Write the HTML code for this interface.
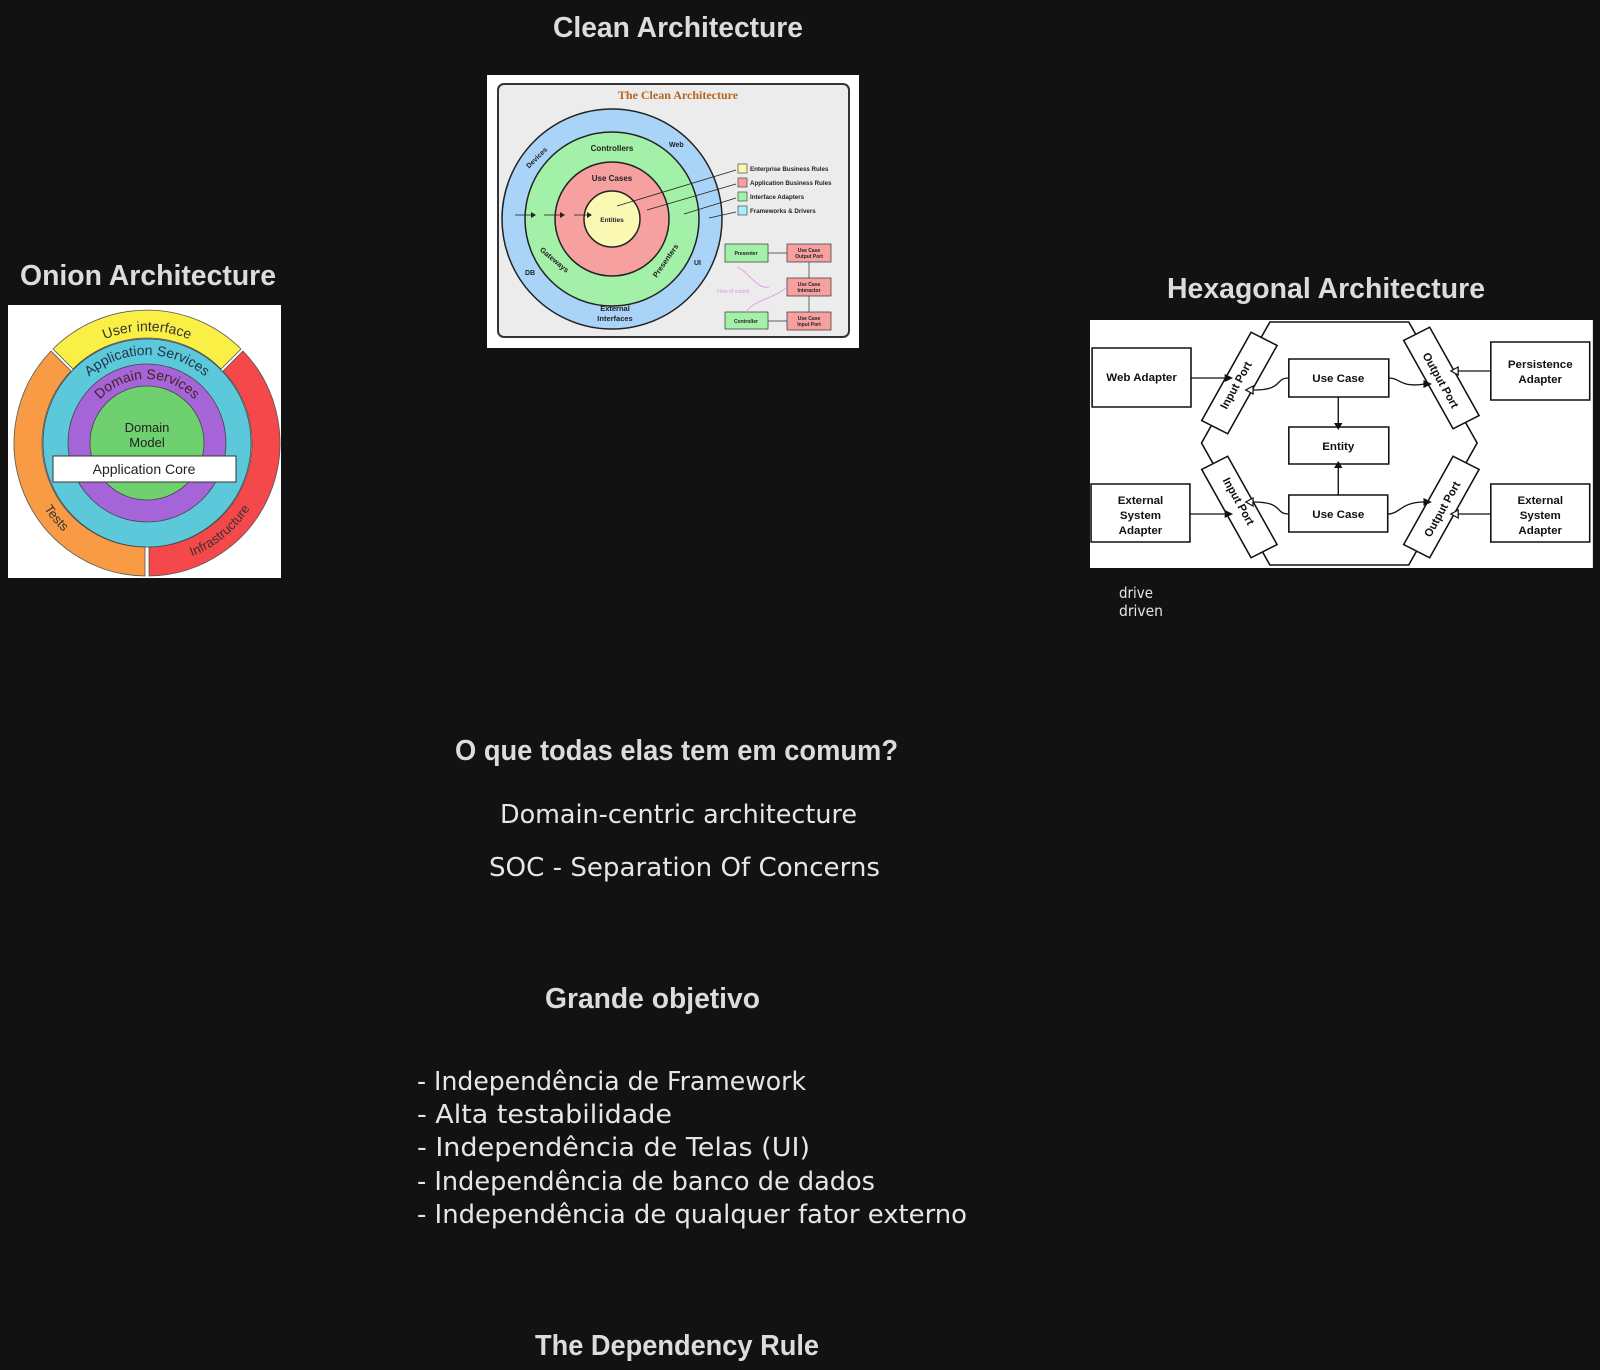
<!DOCTYPE html>
<html><head><meta charset="utf-8"><style>
html,body{margin:0;padding:0;background:#121212;}
svg{display:block}
.t{font-family:"Liberation Sans",sans-serif;font-weight:bold;fill:#dcdcdc;}
.h{font-family:"DejaVu Sans","Liberation Sans",sans-serif;font-weight:normal;fill:#e6e6e6;}
</style></head><body>
<svg width="1600" height="1370" viewBox="0 0 1600 1370" xmlns="http://www.w3.org/2000/svg">
<rect width="1600" height="1370" fill="#121212"/>

<!-- Titles -->
<text class="t" x="553" y="37" font-size="29" textLength="250" lengthAdjust="spacingAndGlyphs">Clean Architecture</text>
<text class="t" x="20" y="285" font-size="29" textLength="256" lengthAdjust="spacingAndGlyphs">Onion Architecture</text>
<text class="t" x="1167" y="298" font-size="29" textLength="318" lengthAdjust="spacingAndGlyphs">Hexagonal Architecture</text>
<text class="t" x="455" y="760" font-size="29" textLength="443" lengthAdjust="spacingAndGlyphs">O que todas elas tem em comum?</text>
<text class="t" x="545" y="1008" font-size="29" textLength="215" lengthAdjust="spacingAndGlyphs">Grande objetivo</text>
<text class="t" x="535" y="1355" font-size="29" textLength="284" lengthAdjust="spacingAndGlyphs">The Dependency Rule</text>

<!-- handwritten -->
<text class="h" x="500" y="823" font-size="26" textLength="357" lengthAdjust="spacingAndGlyphs">Domain-centric architecture</text>
<text class="h" x="489" y="876" font-size="26" textLength="391" lengthAdjust="spacingAndGlyphs">SOC - Separation Of Concerns</text>
<text class="h" x="417" y="1090" font-size="26" textLength="389" lengthAdjust="spacingAndGlyphs">- Independência de Framework</text>
<text class="h" x="417" y="1123" font-size="26" textLength="255" lengthAdjust="spacingAndGlyphs">- Alta testabilidade</text>
<text class="h" x="417" y="1156" font-size="26" textLength="393" lengthAdjust="spacingAndGlyphs">- Independência de Telas (UI)</text>
<text class="h" x="417" y="1190" font-size="26" textLength="458" lengthAdjust="spacingAndGlyphs">- Independência de banco de dados</text>
<text class="h" x="417" y="1223" font-size="26" textLength="550" lengthAdjust="spacingAndGlyphs">- Independência de qualquer fator externo</text>
<text class="h" x="1119" y="598" font-size="15" textLength="34" lengthAdjust="spacingAndGlyphs">drive</text>
<text class="h" x="1119" y="616" font-size="15" textLength="44" lengthAdjust="spacingAndGlyphs">driven</text>

<!-- Onion -->
<g transform="translate(8,305)">
<rect width="273" height="273" fill="#fff"/>
<g transform="translate(139,138)">
<path d="M-94,-94 A133,133 0 0 1 94,-94 L74,-74 A104,104 0 0 0 -74,-74 Z" fill="#f9ef45" stroke="#555" stroke-width="0.8"/>
<path d="M-96,-92 A133,133 0 0 0 -2,133 L-2,104 A104,104 0 0 1 -76,-72 Z" fill="#f99b45" stroke="#555" stroke-width="0.8"/>
<path d="M96,-92 A133,133 0 0 1 2,133 L2,104 A104,104 0 0 0 76,-72 Z" fill="#f5484a" stroke="#555" stroke-width="0.8"/>
<circle r="104" fill="#5cc9da" stroke="#444" stroke-width="0.8"/>
<circle r="79" fill="#a564d8" stroke="#444" stroke-width="0.8"/>
<circle r="57" fill="#6fd06f" stroke="#444" stroke-width="0.8"/>
<defs>
<path id="a1" d="M-112,0 A112,112 0 0 1 112,0"/>
<path id="a2" d="M-88,0 A88,88 0 0 1 88,0"/>
<path id="a3" d="M-64,0 A64,64 0 0 1 64,0"/>
<path id="a4" d="M-122,0 A122,122 0 0 0 122,0"/>
</defs>
<text font-family="Liberation Sans,sans-serif" font-size="14" fill="#333"><textPath href="#a1" startOffset="50%" text-anchor="middle">User interface</textPath></text>
<text font-family="Liberation Sans,sans-serif" font-size="14" fill="#234"><textPath href="#a2" startOffset="50%" text-anchor="middle">Application Services</textPath></text>
<text font-family="Liberation Sans,sans-serif" font-size="14" fill="#422"><textPath href="#a3" startOffset="50%" text-anchor="middle">Domain Services</textPath></text>
<text font-family="Liberation Sans,sans-serif" font-size="13" fill="#333"><textPath href="#a4" startOffset="22%" text-anchor="middle">Tests</textPath></text>
<text font-family="Liberation Sans,sans-serif" font-size="13" fill="#333"><textPath href="#a4" startOffset="72%" text-anchor="middle">Infrastructure</textPath></text>
<text x="0" y="-11" text-anchor="middle" font-family="Liberation Sans,sans-serif" font-size="13" fill="#222">Domain</text>
<text x="0" y="4" text-anchor="middle" font-family="Liberation Sans,sans-serif" font-size="13" fill="#222">Model</text>
</g>
<rect x="45" y="151" width="183" height="26" fill="#fff" stroke="#333"/>
<text x="136" y="169" text-anchor="middle" font-family="Liberation Sans,sans-serif" font-size="14" fill="#222">Application Core</text>
</g>

<!-- Clean -->
<g transform="translate(487,75)">
<rect width="372" height="273" fill="#fff"/>
<rect x="11" y="9" width="351" height="253" rx="6" fill="#ececec" stroke="#333" stroke-width="2"/>
<text x="191" y="24" text-anchor="middle" font-family="Liberation Serif,serif" font-weight="bold" font-size="12" fill="#b5651d">The Clean Architecture</text>
<circle cx="125" cy="144" r="110" fill="#a9d3f7" stroke="#222" stroke-width="1.5"/>
<circle cx="125" cy="144" r="87" fill="#a3f0a8" stroke="#222" stroke-width="1.5"/>
<circle cx="125" cy="144" r="57" fill="#f6a0a0" stroke="#222" stroke-width="1.5"/>
<circle cx="125" cy="144" r="28" fill="#fbf8b3" stroke="#222" stroke-width="1.5"/>
<g font-family="Liberation Sans,sans-serif" font-weight="bold" fill="#222">
<text x="125" y="76" text-anchor="middle" font-size="8">Controllers</text>
<text x="125" y="106" text-anchor="middle" font-size="8">Use Cases</text>
<text x="125" y="147" text-anchor="middle" font-size="6.5">Entities</text>
<text x="182" y="72" font-size="7">Web</text>
<text x="38" y="92" font-size="7" transform="rotate(-45 42 88)">Devices</text>
<text x="38" y="200" font-size="7">DB</text>
<text x="207" y="190" font-size="7">UI</text>
<text x="128" y="236" text-anchor="middle" font-size="7.5">External</text>
<text x="128" y="246" text-anchor="middle" font-size="7.5">Interfaces</text>
<text x="50" y="182" font-size="7.5" transform="rotate(40 60 182)">Gateways</text>
<text x="155" y="195" font-size="7.5" transform="rotate(-55 170 185)">Presenters</text>
</g>
<g stroke="#222" stroke-width="0.8">
<line x1="28" y1="140" x2="44" y2="140"/><line x1="57" y1="140" x2="73" y2="140"/><line x1="87" y1="140" x2="100" y2="140"/>
<line x1="130" y1="131" x2="249" y2="95"/><line x1="160" y1="135" x2="249" y2="109"/><line x1="197" y1="139" x2="249" y2="123"/><line x1="222" y1="143" x2="249" y2="137"/>
</g>
<g fill="#222"><path d="M44,137 L49,140 L44,143Z"/><path d="M73,137 L78,140 L73,143Z"/><path d="M100,137 L105,140 L100,143Z"/></g>
<rect x="251" y="89" width="9" height="9" fill="#fbf8b3" stroke="#333" stroke-width="0.6"/>
<rect x="251" y="103" width="9" height="9" fill="#f6a0a0" stroke="#333" stroke-width="0.6"/>
<rect x="251" y="117" width="9" height="9" fill="#a3f0a8" stroke="#333" stroke-width="0.6"/>
<rect x="251" y="131" width="9" height="9" fill="#a9eef7" stroke="#333" stroke-width="0.6"/>
<g font-family="Liberation Sans,sans-serif" font-weight="bold" font-size="6.2" fill="#222">
<text x="263" y="96">Enterprise Business Rules</text>
<text x="263" y="110">Application Business Rules</text>
<text x="263" y="124">Interface Adapters</text>
<text x="263" y="138">Frameworks &amp; Drivers</text>
</g>
<g stroke="#333" stroke-width="0.7" font-family="Liberation Sans,sans-serif" font-weight="bold" font-size="5" text-anchor="middle">
<rect x="238" y="169" width="43" height="18" fill="#a3f0a8"/>
<rect x="300" y="169" width="44" height="18" fill="#f6a0a0"/>
<rect x="300" y="203" width="44" height="18" fill="#f6a0a0"/>
<rect x="238" y="237" width="43" height="17" fill="#a3f0a8"/>
<rect x="300" y="237" width="44" height="18" fill="#f6a0a0"/>
<line x1="281" y1="178" x2="300" y2="178"/><line x1="281" y1="246" x2="300" y2="246"/>
<line x1="322" y1="187" x2="322" y2="203"/><line x1="322" y1="221" x2="322" y2="237"/>
<g stroke="none" fill="#222">
<text x="259" y="180">Presenter</text><text x="322" y="177">Use Case</text><text x="322" y="183">Output Port</text>
<text x="322" y="211">Use Case</text><text x="322" y="217">Interactor</text>
<text x="259" y="248">Controller</text><text x="322" y="245">Use Case</text><text x="322" y="251">Input Port</text>
</g>
</g>
<path d="M259,238 C265,225 285,225 300,212 M250,192 C260,195 270,215 282,212" fill="none" stroke="#e58fe8" stroke-width="0.8"/>
<text x="230" y="218" font-family="Liberation Sans,sans-serif" font-size="5" fill="#e58fe8">Flow of control</text>
</g>

<!-- Hexagonal -->
<g transform="translate(1090,320) scale(1.052,1)" font-family="Liberation Sans,sans-serif">
<rect width="478" height="248" fill="#fff"/>
<polygon points="171,2 303,2 368,123 303,245 171,245 106,123" fill="#fff" stroke="#111" stroke-width="1.5"/>
<g stroke="#111" stroke-width="1.5" fill="#fff">
<rect x="2" y="28" width="94" height="59"/>
<rect x="381" y="22" width="94" height="58"/>
<rect x="1" y="164" width="94" height="58"/>
<rect x="381" y="164" width="94" height="58"/>
<rect x="189" y="39" width="95" height="38"/>
<rect x="189" y="107" width="95" height="37"/>
<rect x="189" y="175" width="94" height="37"/>
<rect x="-50" y="-14" width="100" height="28" transform="translate(142,63) rotate(-62)"/>
<rect x="-50" y="-14" width="100" height="28" transform="translate(334,58) rotate(62)"/>
<rect x="-50" y="-14" width="100" height="28" transform="translate(142,187) rotate(62)"/>
<rect x="-50" y="-14" width="100" height="28" transform="translate(334,187) rotate(-62)"/>
</g>
<g stroke="#111" stroke-width="1.3" fill="none">
<line x1="96" y1="58" x2="128" y2="58"/>
<line x1="95" y1="194" x2="128" y2="194"/>
<line x1="381" y1="51" x2="350" y2="51"/>
<line x1="381" y1="194" x2="350" y2="194"/>
<line x1="236" y1="77" x2="236" y2="104"/>
<line x1="236" y1="175" x2="236" y2="147"/>
<path d="M189,58 C175,58 185,70 155,70"/>
<path d="M284,58 C295,58 295,68 318,64"/>
<path d="M189,194 C175,194 185,182 155,182"/>
<path d="M283,194 C295,194 295,182 318,182"/>
</g>
<g fill="#111">
<path d="M128,54 L136,58 L128,62Z"/><path d="M128,190 L136,194 L128,198Z"/>
<path d="M232,103 L236,110 L240,103Z"/><path d="M232,148 L236,141 L240,148Z"/>
<path d="M317,60 L325,64 L317,68Z"/><path d="M317,178 L325,182 L317,186Z"/>
</g>
<g fill="#fff" stroke="#111" stroke-width="1.2">
<path d="M350,47 L343,51 L350,55Z"/><path d="M350,190 L343,194 L350,198Z"/>
<path d="M155,66 L148,70 L155,74Z"/><path d="M155,178 L148,182 L155,186Z"/>
</g>
<g font-weight="bold" font-size="11" fill="#111" text-anchor="middle">
<text x="49" y="61">Web Adapter</text>
<text x="428" y="48">Persistence</text><text x="428" y="63">Adapter</text>
<text x="48" y="184">External</text><text x="48" y="199">System</text><text x="48" y="214">Adapter</text>
<text x="428" y="184">External</text><text x="428" y="199">System</text><text x="428" y="214">Adapter</text>
<text x="236" y="62">Use Case</text>
<text x="236" y="130">Entity</text>
<text x="236" y="198">Use Case</text>
<text transform="translate(142,67) rotate(-62)">Input Port</text>
<text transform="translate(330,62) rotate(62)">Output Port</text>
<text transform="translate(138,183) rotate(62)">Input Port</text>
<text transform="translate(338,191) rotate(-62)">Output Port</text>
</g>
</g>
</svg>
</body></html>
